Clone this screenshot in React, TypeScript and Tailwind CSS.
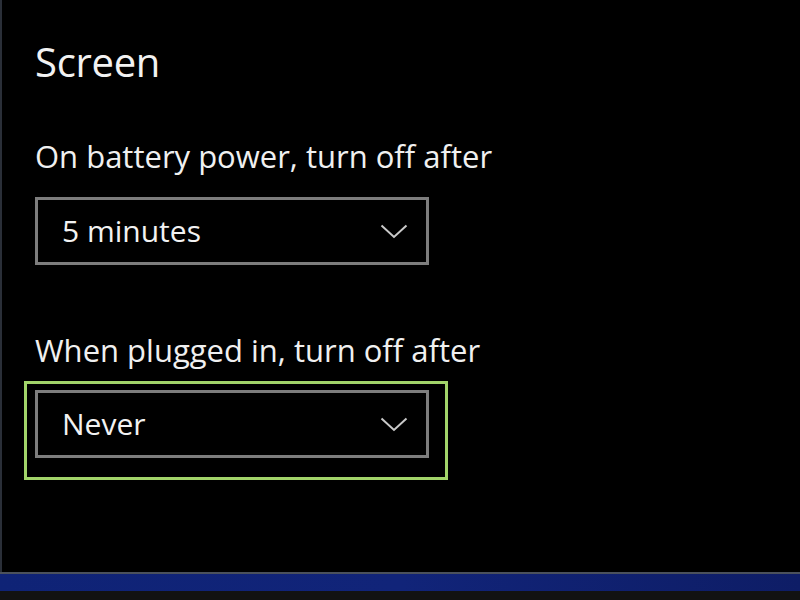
import { ReactNode } from "react";

const font = { fontFamily: '"Open Sans", "Noto Sans", sans-serif' };

function Chevron() {
  return (
    <svg width="28" height="15" viewBox="0 0 28 15" fill="none" className="shrink-0">
      <path d="M1.5 1.5 L14 13 L26.5 1.5" stroke="#c9c9c9" strokeWidth="2" />
    </svg>
  );
}

function Dropdown({ value, children }: { value: string; children?: ReactNode }) {
  return (
    <div className="relative w-[394px]">
      <div className="flex h-[68px] items-center justify-between border-[3px] border-[#7d7d7d] pl-[24px] pr-[18px]">
        <span className="text-[30px] leading-[30px] text-[#f2f2f2]">{value}</span>
        <Chevron />
      </div>
      {children}
    </div>
  );
}

export default function App() {
  return (
    <div className="flex h-[600px] w-[800px] flex-col bg-black" style={font}>
      {/* Settings panel */}
      <div className="h-[572px] border-l-2 border-[#2a2f38] pl-[33px]">
        <h1 className="pt-[42px] text-[40px] leading-[40px] tracking-[-0.3px] text-[#f2f2f2]">Screen</h1>

        <p className="mt-[59px] text-[31px] leading-[31px] text-[#f0f0f0]">On battery power, turn off after</p>
        <div className="mt-[25px]">
          <Dropdown value="5 minutes" />
        </div>

        <p className="mt-[70px] text-[31px] leading-[31px] text-[#f0f0f0]">When plugged in, turn off after</p>
        <div className="mt-[24px]">
          <Dropdown value="Never">
            {/* highlight */}
            <div className="pointer-events-none absolute left-[-11px] top-[-9px] h-[99px] w-[424px] border-[3px] border-[#a2d46a]" />
          </Dropdown>
        </div>
      </div>

      {/* Taskbar edge */}
      <div className="h-[2px] bg-[#4b515c]" />
      <div className="h-[17px] bg-gradient-to-r from-[#0f2376] via-[#112479] to-[#0e1d66]" />
      <div className="flex-1 bg-[#121212]" />
    </div>
  );
}
